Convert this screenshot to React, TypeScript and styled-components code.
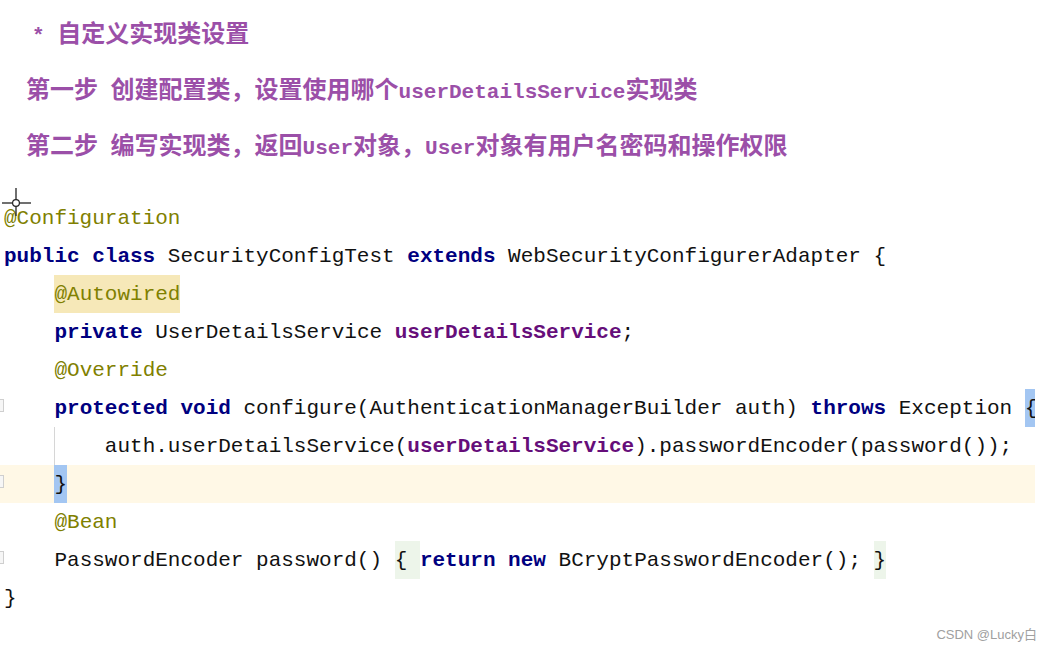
import React from "react";
import styled, { createGlobalStyle } from "styled-components";

const Global = createGlobalStyle`
  html, body { margin: 0; padding: 0; background: #ffffff; }
  #root { width: 1051px; height: 652px; }
`;

const Page = styled.div`
  position: relative;
  width: 1051px;
  height: 652px;
  background: #ffffff;
  overflow: hidden;
  display: flex;
  flex-direction: column;
`;

const Notes = styled.div`
  display: flex;
  flex-direction: column;
  gap: 18px;
  padding-top: 17px;
`;

const NoteLine = styled.div<{ $indent: number }>`
  height: 38px;
  line-height: 38px;
  padding-left: ${(p) => p.$indent}px;
  font-family: "Liberation Mono", "Noto Sans CJK SC", monospace;
  font-size: 24px;
  font-weight: 700;
  color: #9b4fa8;
  white-space: pre;
`;

const Latin = styled.span`
  font-family: "Liberation Mono", monospace;
  font-size: 21px;
  font-weight: 700;
`;

const Code = styled.div`
  margin-top: 32px;
  width: 1035px;
  overflow: hidden;
  font-family: "Liberation Mono", monospace;
  font-size: 21px;
  color: #111111;
`;

const CodeLine = styled.div<{ $current?: boolean }>`
  display: flex;
  align-items: center;
  height: 38px;
  white-space: pre;
  background: ${(p) => (p.$current ? "#fff8e6" : "transparent")};
`;

const Gutter = styled.span`
  flex: 0 0 4px;
  width: 4px;
  display: flex;
  align-items: center;
  align-self: stretch;
`;

const FoldMark = styled.span`
  display: block;
  width: 3px;
  height: 11px;
  margin-top: -6px;
  border: 1px solid #cfcfcf;
  border-left: none;
  background: #f6f6f6;
`;

type Kind = "kw" | "ann" | "field" | "plain";

const T = styled.span<{ $k?: Kind }>`
  color: ${(p) =>
    p.$k === "kw" ? "#000080" : p.$k === "ann" ? "#808000" : p.$k === "field" ? "#660e7a" : "#111111"};
  font-weight: ${(p) => (p.$k === "kw" || p.$k === "field" ? 700 : 400)};
`;

const Hl = styled.span<{ $bg: string }>`
  display: flex;
  align-items: center;
  align-self: stretch;
  background: ${(p) => p.$bg};
`;

const Guide = styled.span`
  display: flex;
  align-items: center;
  align-self: stretch;
  box-shadow: inset 1px 0 #d6d6d6;
`;

const Watermark = styled.div`
  align-self: flex-end;
  margin-top: 9px;
  margin-right: 14px;
  font-family: "Liberation Sans", "Noto Sans CJK SC", sans-serif;
  font-size: 13px;
  line-height: 18px;
  color: #a0a0a0;
`;

const Cursor = styled.svg`
  position: absolute;
  left: 0;
  top: 187px;
`;

export default function App() {
  return (
    <Page>
      <Global />
      <Notes>
        <NoteLine $indent={32}>
          <Latin>* </Latin>自定义实现类设置
        </NoteLine>
        <NoteLine $indent={26}>
          第一步<Latin> </Latin>创建配置类，设置使用哪个<Latin>userDetailsService</Latin>实现类
        </NoteLine>
        <NoteLine $indent={26}>
          第二步<Latin> </Latin>编写实现类，返回<Latin>User</Latin>对象，<Latin>User</Latin>对象有用户名密码和操作权限
        </NoteLine>
      </Notes>
      <Code>
        <CodeLine>
          <Gutter />
          <T $k="ann">@Configuration</T>
        </CodeLine>
        <CodeLine>
          <Gutter />
          <T $k="kw">public class </T>
          <T>SecurityConfigTest </T>
          <T $k="kw">extends </T>
          <T>WebSecurityConfigurerAdapter {"{"}</T>
        </CodeLine>
        <CodeLine>
          <Gutter />
          <T>{"    "}</T>
          <Hl $bg="#f6e8b8">
            <T $k="ann">@Autowired</T>
          </Hl>
        </CodeLine>
        <CodeLine>
          <Gutter />
          <T>{"    "}</T>
          <T $k="kw">private </T>
          <T>UserDetailsService </T>
          <T $k="field">userDetailsService</T>
          <T>;</T>
        </CodeLine>
        <CodeLine>
          <Gutter />
          <T>{"    "}</T>
          <T $k="ann">@Override</T>
        </CodeLine>
        <CodeLine>
          <Gutter>
            <FoldMark />
          </Gutter>
          <T>{"    "}</T>
          <T $k="kw">protected void </T>
          <T>configure(AuthenticationManagerBuilder auth) </T>
          <T $k="kw">throws </T>
          <T>Exception </T>
          <Hl $bg="#a3c6f2">
            <T>{"{"}</T>
          </Hl>
        </CodeLine>
        <CodeLine>
          <Gutter />
          <T>{"    "}</T>
          <Guide>
            <T>{"    "}</T>
          </Guide>
          <T>auth.userDetailsService(</T>
          <T $k="field">userDetailsService</T>
          <T>).passwordEncoder(password());</T>
        </CodeLine>
        <CodeLine $current>
          <Gutter>
            <FoldMark />
          </Gutter>
          <T>{"    "}</T>
          <Hl $bg="#a3c6f2">
            <T>{"}"}</T>
          </Hl>
        </CodeLine>
        <CodeLine>
          <Gutter />
          <T>{"    "}</T>
          <T $k="ann">@Bean</T>
        </CodeLine>
        <CodeLine>
          <Gutter>
            <FoldMark />
          </Gutter>
          <T>{"    "}PasswordEncoder password() </T>
          <Hl $bg="#edf5ea">
            <T>{"{ "}</T>
          </Hl>
          <T $k="kw">return new </T>
          <T>BCryptPasswordEncoder();</T>
          <T> </T>
          <Hl $bg="#edf5ea">
            <T>{"}"}</T>
          </Hl>
        </CodeLine>
        <CodeLine>
          <Gutter />
          <T>{"}"}</T>
        </CodeLine>
      </Code>
      <Watermark>CSDN @Lucky白</Watermark>
      <Cursor width="34" height="32" viewBox="0 0 34 32">
        <line x1="2" y1="16" x2="31" y2="16" stroke="#222" strokeWidth="1.3" />
        <line x1="16" y1="1" x2="16" y2="29" stroke="#222" strokeWidth="1.3" />
        <circle cx="16" cy="16" r="3.4" fill="#fff" stroke="#222" strokeWidth="1.2" />
      </Cursor>
    </Page>
  );
}
